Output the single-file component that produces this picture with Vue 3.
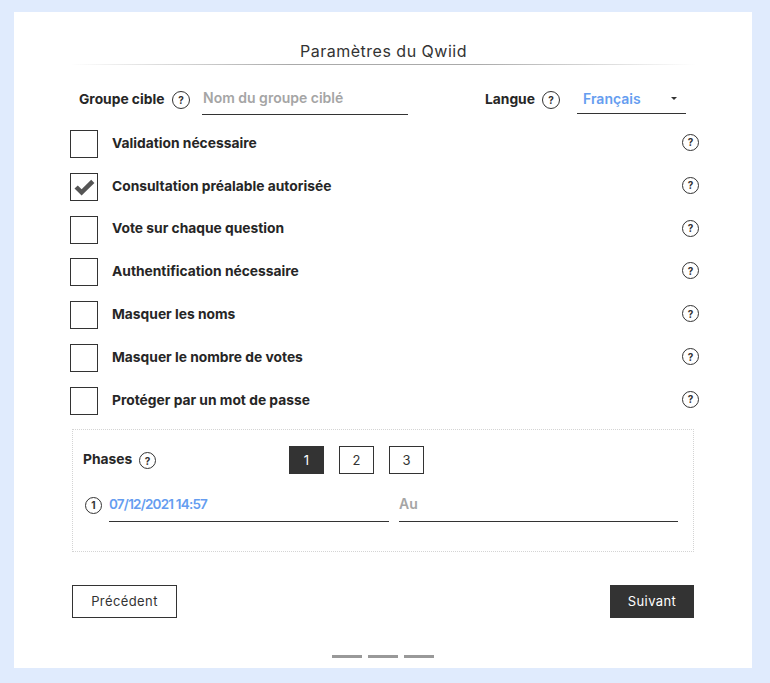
<script setup>
const rows = [
  { label: 'Validation nécessaire', checked: false },
  { label: 'Consultation préalable autorisée', checked: true },
  { label: 'Vote sur chaque question', checked: false },
  { label: 'Authentification nécessaire', checked: false },
  { label: 'Masquer les noms', checked: false },
  { label: 'Masquer le nombre de votes', checked: false },
  { label: 'Protéger par un mot de passe', checked: false },
]
</script>

<template>
  <div class="page">
    <main class="card">
      <h1 class="title">Paramètres du Qwiid</h1>
      <div class="rule"></div>

      <div class="top">
        <span class="strong group-label">Groupe cible</span>
        <span class="help">?</span>
        <div class="field group-field"><span class="ph">Nom du groupe ciblé</span></div>
        <span class="strong lang-label">Langue</span>
        <span class="help">?</span>
        <div class="field lang-field">
          <span class="blue">Français</span>
          <i class="caret"></i>
        </div>
      </div>

      <ul class="checks">
        <li v-for="r in rows" :key="r.label" class="check-row">
          <span class="box">
            <svg v-if="r.checked" width="24" height="20" viewBox="0 0 24 20">
              <path d="M2.5 11.6 L5.8 8.4 L9.6 12.2 L19.2 2.8 L22.4 6 L9.6 18.6 Z" fill="#555" />
            </svg>
          </span>
          <span class="strong row-label">{{ r.label }}</span>
          <span class="help row-help">?</span>
        </li>
      </ul>

      <section class="phases">
        <div class="phase-head">
          <span class="strong phase-label">Phases</span>
          <span class="help phase-help">?</span>
          <div class="steps">
            <span class="step on">1</span>
            <span class="step">2</span>
            <span class="step">3</span>
          </div>
        </div>
        <div class="dates">
          <span class="help num">1</span>
          <div class="field date-a"><span class="blue date">07/12/2021 14:57</span></div>
          <div class="field date-b"><span class="ph">Au</span></div>
        </div>
      </section>

      <div class="actions">
        <button class="btn prev">Précédent</button>
        <button class="btn next">Suivant</button>
      </div>

      <div class="dashes"><i></i><i></i><i></i></div>
    </main>
  </div>
</template>

<style>
html, body { margin: 0; background: #e0ebfd; }
</style>

<style scoped>
.page {
  height: 683px;
  box-sizing: border-box;
  padding: 12px 18px 15px 14px;
  font-family: Inter, "Liberation Sans", sans-serif;
  color: #2b2b2b;
  overflow: hidden;
}
.card {
  height: 656px;
  background: #fff;
  box-sizing: border-box;
  padding-top: 29px;
  display: flex;
  flex-direction: column;
}
.title {
  margin: 0;
  height: 23px;
  font-size: 16px;
  line-height: 20px;
  font-weight: 400;
  text-align: center;
  color: #333;
  padding-left: 1px;
  letter-spacing: 0.5px;
}
.rule {
  height: 1px;
  margin: 0 56px 0 56px;
  background: linear-gradient(90deg, #fff, #aaa 35%, #aaa 65%, #fff);
}
.strong { font-size: 13.8px; font-weight: 700; color: #262626; letter-spacing: 0; }
.help {
  width: 16px;
  height: 16px;
  border: 1px solid #333;
  border-radius: 50%;
  box-sizing: content-box;
  display: inline-flex;
  align-items: center;
  justify-content: center;
  font-size: 10px;
  font-weight: 700;
  color: #333;
  flex: none;
}
.top {
  display: flex;
  align-items: center;
  height: 49px;
  margin-left: 65px;
  margin-top: 0;
}
.group-label { width: 93px; position: relative; top: 9px; line-height: 16px; }
.top > .help { position: relative; top: 10px; }
.group-field { width: 206px; margin-left: 12px; margin-top: 20px; }
.lang-label { margin-left: 77px; width: 57px; position: relative; top: 9px; line-height: 16px; }
.lang-field { width: 109px; margin: 20px 0 2px 17px; display: flex; justify-content: space-between; align-items: center; }
.field {
  border-bottom: 1px solid #333;
  box-sizing: border-box;
  height: 30px;
  padding-left: 1px;
  font-size: 14px;
  font-weight: 600;
}
.group-field .ph { position: relative; top: 4px; }
.lang-field { padding: 0 9px 0 6px; }
.ph { color: #a5a5a5; }
.blue { color: #659df0; }
.caret {
  width: 0;
  height: 0;
  border: 3px solid transparent;
  border-top: 3px solid #333;
  border-bottom: 0;
}
.checks {
  list-style: none;
  margin: 16px 0 0;
  padding: 0 53px 0 56px;
  display: grid;
  row-gap: 14.83px;
}
.check-row {
  display: flex;
  align-items: center;
  height: 28px;
}
.box {
  width: 28px;
  height: 28px;
  box-sizing: border-box;
  border: 1px solid #333;
  display: flex;
  align-items: center;
  justify-content: center;
  flex: none;
}
.row-label { margin-left: 14px; flex: 1; position: relative; top: -1.2px; }
.row-help { width: 15px; height: 15px; position: relative; top: -1.6px; }
.phases {
  margin: 14px 58px 0;
  height: 123px;
  box-sizing: border-box;
  border: 1px dotted #d4d4d4;
  padding: 16px 15px 0 10px;
}
.phase-head { display: flex; align-items: center; height: 28px; }
.phase-label { width: 56px; position: relative; top: -1px; }
.phases .help { width: 15px; height: 15px; }
.phase-help { position: relative; top: 1px; }
.steps { display: flex; gap: 15px; margin-left: 133px; }
.step {
  width: 35px;
  height: 28px;
  box-sizing: border-box;
  border: 1px solid #333;
  display: flex;
  align-items: center;
  justify-content: center;
  font-size: 13px;
  color: #333;
}
.step.on { background: #333; color: #fff; }
.dates { display: flex; align-items: flex-end; margin-top: 18px; padding-left: 2px; }
.dates .num { margin-right: 7px; margin-bottom: 8px; font-size: 10px; }
.date-a { width: 280px; padding-left: 0; }
.date-b { width: 279px; margin-left: 10px; padding-left: 0; }
.date-a span, .date-b span { position: relative; top: 3px; }
.date { letter-spacing: -0.8px; font-size: 13.5px; }
.actions {
  display: flex;
  justify-content: space-between;
  margin: 33px 58px 0;
}
.btn {
  height: 33px;
  font: 400 13px Inter, "Liberation Sans", sans-serif;
  letter-spacing: 0.4px;
  padding: 0;
  box-sizing: border-box;
  border: 1px solid #333;
  border-radius: 0;
}
.prev { width: 105px; background: #fff; color: #333; }
.next { width: 84px; background: #333; color: #fff; }
.dashes { display: flex; gap: 6px; justify-content: center; margin-top: 37px; padding-right: 14px; margin-left: 14px; }
.dashes i { display: block; width: 30px; height: 3px; background: #999; }
</style>
